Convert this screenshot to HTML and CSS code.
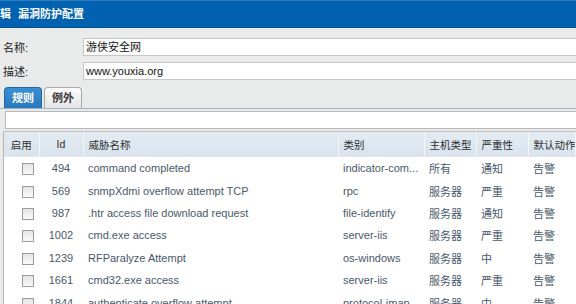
FILE: index.html
```html
<!DOCTYPE html>
<html lang="zh-CN">
<head>
  <meta charset="UTF-8">
  <title>漏洞防护配置</title>
  <link rel="stylesheet" href="styles.css">
</head>
<body>

  <div class="titlebar"><span class="title">编辑</span><span class="subtitle">漏洞防护配置</span></div>

  <div class="form">
    <div class="field">
      <label>名称:</label>
      <div class="input">游侠安全网</div>
    </div>
    <div class="field">
      <label>描述:</label>
      <div class="input">www.youxia.org</div>
    </div>
  </div>

  <div class="tabs">
    <div class="tab active">规则</div>
    <div class="tab">例外</div>
  </div>

  <div class="filter"></div>

  <div class="grid">
    <table>
      <colgroup>
        <col style="width:35px">
        <col style="width:44px">
        <col style="width:255px">
        <col style="width:86px">
        <col style="width:52px">
        <col style="width:52px">
        <col>
      </colgroup>
      <thead>
        <tr>
          <th class="c">启用</th>
          <th class="c">Id</th>
          <th>威胁名称</th>
          <th>类别</th>
          <th>主机类型</th>
          <th>严重性</th>
          <th>默认动作</th>
        </tr>
      </thead>
      <tbody>
        <tr><td class="cb"><span class="check"></span></td><td class="c">494</td><td>command completed</td><td>indicator-com...</td><td>所有</td><td>通知</td><td>告警</td></tr>
        <tr><td class="cb"><span class="check"></span></td><td class="c">569</td><td>snmpXdmi overflow attempt TCP</td><td>rpc</td><td>服务器</td><td>严重</td><td>告警</td></tr>
        <tr><td class="cb"><span class="check"></span></td><td class="c">987</td><td>.htr access file download request</td><td>file-identify</td><td>服务器</td><td>通知</td><td>告警</td></tr>
        <tr><td class="cb"><span class="check"></span></td><td class="c">1002</td><td>cmd.exe access</td><td>server-iis</td><td>服务器</td><td>严重</td><td>告警</td></tr>
        <tr><td class="cb"><span class="check"></span></td><td class="c">1239</td><td>RFParalyze Attempt</td><td>os-windows</td><td>服务器</td><td>中</td><td>告警</td></tr>
        <tr><td class="cb"><span class="check"></span></td><td class="c">1661</td><td>cmd32.exe access</td><td>server-iis</td><td>服务器</td><td>严重</td><td>告警</td></tr>
        <tr><td class="cb"><span class="check"></span></td><td class="c">1844</td><td>authenticate overflow attempt</td><td>protocol-imap</td><td>服务器</td><td>中</td><td>告警</td></tr>
      </tbody>
    </table>
  </div>

</body>
</html>
```

FILE: styles.css
```css
html, body {
  height: 304px;
  overflow: hidden;
}

body {
  margin: 0;
  background-color: #e9eaea;
  font-family: 'Liberation Sans', 'Noto Sans CJK SC', sans-serif;
  font-size: 11px;
  color: #222;
}

.titlebar {
  height: 26px;
  background-color: #0062b0;
  border-top: 1px solid #2f7dbd;
  border-bottom: 1px solid #004f8f;
  color: white;
  font-weight: bold;
  font-size: 11px;
  line-height: 26px;
  white-space: nowrap;
  overflow: hidden;
}

.title {
  display: inline-block;
  margin-left: -11px;
}

.subtitle {
  margin-left: 7px;
}

.form {
  padding-top: 10px;
}

.field {
  display: flex;
  align-items: center;
  height: 18px;
  margin-bottom: 6px;
}

.field label {
  width: 80px;
  padding-left: 3px;
  font-size: 11px;
  color: #222;
}

.input {
  flex: 1;
  height: 16px;
  line-height: 16px;
  padding-left: 2px;
  background: white;
  border: 1px solid #c6c6c6;
  border-right: none;
  font-size: 11px;
  color: #111;
}

.tabs {
  display: flex;
  gap: 2px;
  padding-left: 4px;
  margin-top: 1px;
  height: 22px;
  align-items: flex-end;
  border-bottom: 1px solid #9fb3c6;
}

.tab {
  width: 36px;
  height: 20px;
  line-height: 20px;
  text-align: center;
  font-weight: bold;
  color: #3a3a3a;
  background: linear-gradient(#fbfbfb, #e6e6e6);
  border: 1px solid #a9a9a9;
  border-bottom: none;
  border-radius: 4px 4px 0 0;
}

.tab.active {
  color: white;
  background: linear-gradient(#3b8fd0, #2878bd);
  border-color: #1f67a6;
}

.filter {
  margin: 2px 0 0 5px;
  height: 16px;
  background: white;
  border: 1px solid #b9b9b9;
  border-right: none;
}

.grid {
  margin: 2px 0 0 3px;
  height: 172px;
  background: white;
  border-left: 1px solid #b5b5b5;
  border-top: 1px solid #c3c3c3;
  border-bottom: 1px solid #6f87a1;
  overflow: hidden;
}

.grid table {
  width: 100%;
  border-collapse: collapse;
  table-layout: fixed;
}

.grid th {
  height: 24px;
  padding: 0 0 0 5px;
  text-align: left;
  font-weight: normal;
  font-size: 10.5px;
  color: #2e2e2e;
  background: linear-gradient(#e4ebf2, #d9e3ed);
  border-right: 1px solid #f4f7fa;
  border-bottom: 1px solid #e2e8ee;
  white-space: nowrap;
  overflow: hidden;
}

.grid td {
  height: 22.4px;
  padding: 0 0 0 5px;
  color: #4a586a;
  white-space: nowrap;
  overflow: hidden;
}

.grid .c {
  text-align: center;
  padding-left: 0;
}

.grid .cb {
  padding-left: 18px;
}

.check {
  display: inline-block;
  width: 10px;
  height: 10px;
  margin-top: 2px;
  vertical-align: middle;
  border: 1px solid #9c9c9c;
  background: linear-gradient(#e4e4e4, #fafafa);
}
```
